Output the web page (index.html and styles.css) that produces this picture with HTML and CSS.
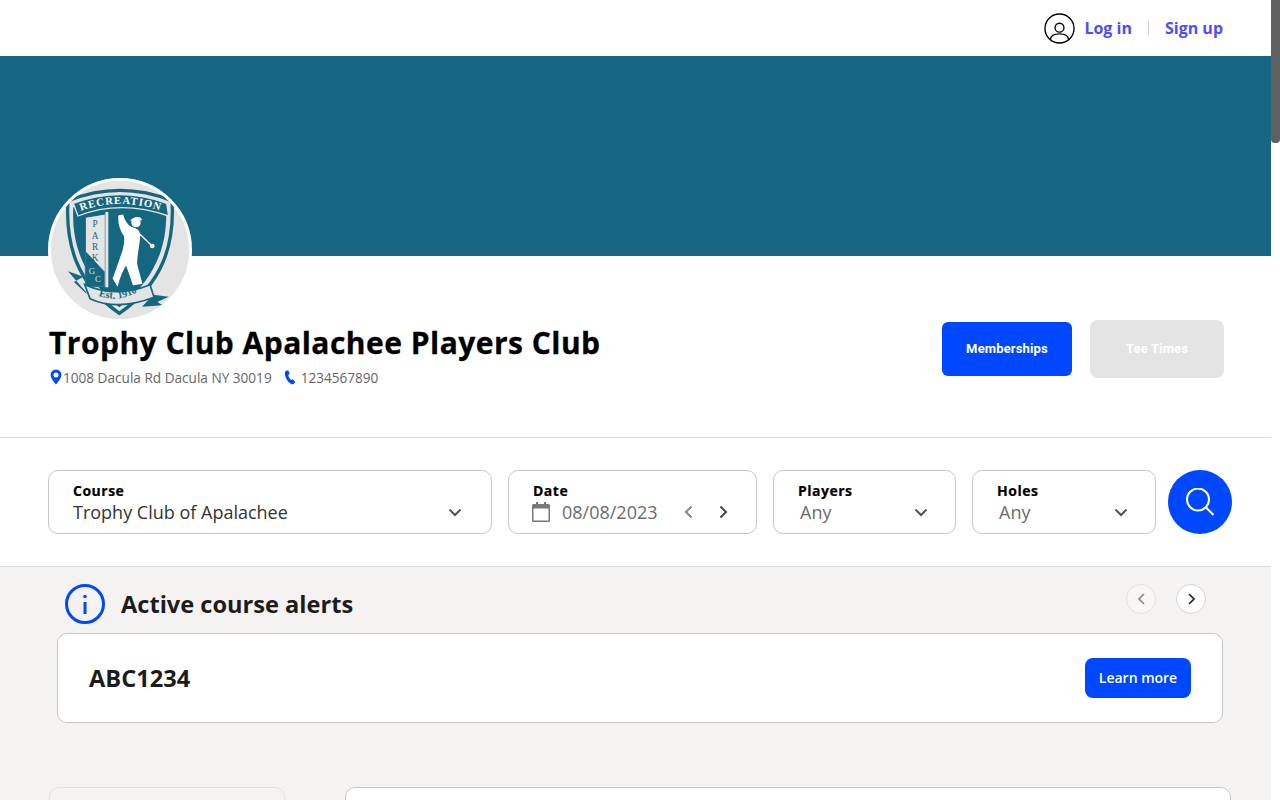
FILE: index.html
```html
<!DOCTYPE html>
<html lang="en">
<head>
<meta charset="utf-8">
<title>Trophy Club Apalachee Players Club</title>
<link rel="stylesheet" href="styles.css">
</head>
<body>
<div class="page">
  <main class="main">
    <header class="topbar">
      <svg class="user-icon" viewBox="0 0 32 32" fill="none" stroke="#000" stroke-width="1.4">
        <circle cx="16" cy="16" r="15"/>
        <circle cx="16" cy="15.200" r="4.600"/>
        <path d="M6.600 27.500C7 23.500 11 21.600 16 21.600s9 1.900 9.400 5.900"/>
      </svg>
      <a class="auth-link" href="#">Log in</a>
      <span class="auth-sep"></span>
      <a class="auth-link" href="#">Sign up</a>
    </header>

    <div class="banner"></div>

    <section class="club">
      <div class="club-left">
        <div class="logo">
          <svg class="crest" viewBox="33 33 414 414">
            <circle cx="240" cy="240" r="207" fill="#e4e4e4"/>
            <path d="M84 92Q240 30 396 92C404 220 370 340 238 430C108 340 76 220 84 92Z" fill="#e4e4e4" stroke="#15667f" stroke-width="10"/>
            <path d="M100 112L378 112C384 220 350 325 238 412C128 325 94 220 100 112Z" fill="#15667f"/>
            <path d="M136 142L196 132V350H136Z" fill="#e4e4e4" stroke="#15667f" stroke-width="3"/>
            <path d="M138 245L194 305V348H138Z" fill="#15667f"/>
            <rect x="196" y="126" width="9" height="226" fill="#e4e4e4"/>
            <path d="M100 100Q240 48 380 100L386 138Q240 88 114 138Z" fill="#15667f" stroke="#e4e4e4" stroke-width="4"/>
            <path id="crestArc" d="M116 125Q240 78 368 125" fill="none"/>
            <text class="crest-text crest-top"><textPath href="#crestArc" startOffset="50%" text-anchor="middle">RECREATION</textPath></text>
            <text class="crest-text crest-side" x="165" y="172" text-anchor="middle">P</text>
            <text class="crest-text crest-side" x="165" y="206" text-anchor="middle">A</text>
            <text class="crest-text crest-side" x="165" y="240" text-anchor="middle">R</text>
            <text class="crest-text crest-side" x="165" y="274" text-anchor="middle">K</text>
            <text class="crest-text crest-gc" x="156" y="312" text-anchor="middle">G</text>
            <text class="crest-text crest-gc" x="174" y="335" text-anchor="middle">C</text>
            <circle cx="288" cy="158" r="14" fill="#fff"/>
            <path d="M270 152Q284 136 302 143L307 150L296 153Z" fill="#fff"/>
            <path d="M237 138L248 136C252 150 260 165 273 172C285 175 295 178 298 190C300 205 296 220 294 235C292 255 288 265 290 285C295 305 300 322 305 340L280 344C272 318 265 298 258 282C248 300 238 320 232 345L220 325C228 305 240 270 250 240C254 225 256 210 254 198C243 185 235 160 237 138Z" fill="#fff" stroke="#fff" stroke-width="4"/>
            <path d="M300 193L334 226" stroke="#fff" stroke-width="4"/>
            <circle cx="337" cy="228" r="7" fill="#fff"/>
            <path d="M138 366L84 304L130 320L102 336L140 372ZM340 374L386 380L352 396L368 406L306 410Z" fill="#15667f"/>
            <path d="M134 344Q230 386 330 344L342 382Q232 424 150 386Z" fill="#e4e4e4" stroke="#15667f" stroke-width="5"/>
            <path id="crestRibbon" d="M172 376Q235 400 296 364" fill="none"/>
            <text class="crest-text crest-est"><textPath href="#crestRibbon" startOffset="50%" text-anchor="middle">Est. 1910</textPath></text>
          </svg>
        </div>
        <h1 class="club-name">Trophy Club Apalachee Players Club</h1>
        <div class="club-meta">
          <svg class="pin-icon" viewBox="0 0 12 16"><path fill-rule="evenodd" d="M6 .5a5.400 5.400 0 0 1 5.400 5.400C11.400 9.400 6 15.500 6 15.500S.6 9.400.6 5.900A5.400 5.400 0 0 1 6 .5Zm0 3a2.500 2.500 0 1 0 0 5 2.500 2.500 0 0 0 0-5Z" fill="#0048ff"/></svg>
          <span>1008 Dacula Rd Dacula NY 30019</span>
          <svg class="phone-icon" viewBox="0 0 14 16"><path d="M2.200.8 4.600.3l1.500 3.800-1.600 1.200c.4 2 1.700 4.300 3.200 5.500l1.900-.8 2.500 3.100-1.800 1.900c-.8.600-1.900.4-2.900-.2C4 12.800 1.700 8.900 1.100 5.200.8 3.400 1 1.700 2.200.8Z" fill="#0048ff"/></svg>
          <span>1234567890</span>
        </div>
      </div>
      <div class="club-actions">
        <a class="btn-member" href="#">Memberships</a>
        <a class="btn-tee" href="#">Tee Times</a>
      </div>
    </section>

    <section class="filters">
      <div class="field field-course">
        <div class="field-label">Course</div>
        <div class="field-row">
          <span class="field-value value-dark">Trophy Club of Apalachee</span>
          <svg class="chev-down" viewBox="0 0 14 9"><path d="M1.500 1.500 7 7l5.500-5.500"/></svg>
        </div>
      </div>
      <div class="field field-date">
        <div class="field-label">Date</div>
        <div class="field-row">
          <svg class="cal-icon" viewBox="0 0 18 20"><path d="M4 0h2v2h6V0h2v2h2.500A1.500 1.500 0 0 1 18 3.500v15a1.500 1.500 0 0 1-1.500 1.500h-15A1.500 1.500 0 0 1 0 18.500v-15A1.500 1.500 0 0 1 1.500 2H4Zm-2.500 6.500v12h15v-12Z" fill="#77777f"/></svg>
          <span class="field-value value-date">08/08/2023</span>
          <svg class="chev-side chev-prev" viewBox="0 0 9 14"><path d="M7.500 1.500 2 7l5.500 5.500"/></svg>
          <svg class="chev-side chev-next" viewBox="0 0 9 14"><path d="M1.500 1.500 7 7l-5.500 5.500"/></svg>
        </div>
      </div>
      <div class="field field-players">
        <div class="field-label">Players</div>
        <div class="field-row">
          <span class="field-value value-any">Any</span>
          <svg class="chev-down chev-narrow" viewBox="0 0 14 9"><path d="M1.500 1.500 7 7l5.500-5.500"/></svg>
        </div>
      </div>
      <div class="field field-holes">
        <div class="field-label">Holes</div>
        <div class="field-row">
          <span class="field-value value-any">Any</span>
          <svg class="chev-down chev-narrow" viewBox="0 0 14 9"><path d="M1.500 1.500 7 7l5.500-5.500"/></svg>
        </div>
      </div>
      <button class="search-btn" aria-label="Search">
        <svg viewBox="0 0 28 28" fill="none" stroke="#fff" stroke-width="2"><circle cx="12" cy="11.500" r="11"/><path d="m20 19.500 7.500 7.500"/></svg>
      </button>
    </section>

    <section class="content">
      <div class="alerts-head">
        <div class="alerts-title">
          <svg class="info-icon" viewBox="0 0 40 40" fill="none"><circle cx="20" cy="20" r="18.500" stroke="#0048ff" stroke-width="3"/><circle cx="20" cy="12.500" r="1.800" fill="#0048ff"/><path d="M20 18v12" stroke="#0048ff" stroke-width="3"/></svg>
          <h2>Active course alerts</h2>
        </div>
        <div class="alerts-nav">
          <span class="nav-circle nav-off"><svg viewBox="0 0 9 14"><path d="M7 2 2 7l5 5"/></svg></span>
          <span class="nav-circle nav-on"><svg viewBox="0 0 9 14"><path d="m2 2 5 5-5 5"/></svg></span>
        </div>
      </div>
      <div class="alert-card">
        <span class="alert-code">ABC1234</span>
        <a class="btn-learn" href="#">Learn more</a>
      </div>
      <div class="results">
        <div class="side-card"></div>
        <div class="list-card"></div>
      </div>
    </section>
  </main>
  <div class="scrollbar"><div class="scroll-thumb"></div></div>
</div>
</body>
</html>
```

FILE: styles.css
```css
* { box-sizing: border-box; }
html, body { margin: 0; padding: 0; height: 100%; }
body { font-family: "Open Sans", "Liberation Sans", sans-serif; background: #fff; overflow: hidden; }
a { text-decoration: none; }
h1, h2 { margin: 0; }

.page { display: flex; height: 800px; overflow: hidden; }
.main { flex: 1; min-width: 0; overflow: hidden; }
.scrollbar { width: 9px; background: #fff; }
.scroll-thumb { height: 143px; background: #5f5f5f; border-radius: 0 0 4px 4px; }

.topbar { height: 56px; display: flex; align-items: center; justify-content: flex-end; padding-right: 48px; }
.user-icon { width: 31px; height: 31px; margin-right: 9px; }
.auth-link { color: #4d4dff; font-size: 16px; font-weight: 700; line-height: 24px; }
.auth-sep { width: 1px; height: 14px; background: #d0d0d0; margin: 0 16px; }

.banner { height: 200px; background: #156682; }

.club { height: 182px; border-bottom: 1px solid #dcdcdc; padding: 0 47px 0 48px; display: flex; justify-content: space-between; }
.club-left { display: flex; flex-direction: column; }
.logo { width: 144px; height: 144px; margin-top: -78px; border: 3px solid #fff; border-radius: 50%; background: #e4e4e4; position: relative; overflow: hidden; flex: none; }
.crest { display: block; width: 138px; height: 138px; }
.crest-text { font-family: "Liberation Serif", serif; }
.crest-top { fill: #fff; font-size: 32px; font-weight: 700; letter-spacing: 3px; }
.crest-side { fill: #15667f; font-size: 28px; }
.crest-gc { fill: #e4e4e4; font-size: 26px; }
.crest-est { fill: #15667f; font-size: 31px; font-weight: 700; }
.club-name { margin: 0 0 0 1px; font-size: 30px; line-height: 42px; font-weight: 700; letter-spacing: .47px; -webkit-text-stroke: .3px #000; color: #000; white-space: nowrap; }
.club-meta { margin: 4px 0 0 2px; display: flex; align-items: center; font-size: 13.600px; line-height: 20px; color: #666; white-space: nowrap; }
.pin-icon { width: 12px; height: 16px; margin-right: 1px; margin-top: -2px; }
.phone-icon { width: 13px; height: 15px; margin: -2px 4px 0 12px; }

.club-actions { display: flex; align-items: center; gap: 18px; margin-top: 64px; height: 58px; }
.btn-member, .btn-tee { display: flex; align-items: center; justify-content: center; color: #fff; font-family: Roboto, "Open Sans", sans-serif; font-weight: 700; font-size: 13px; letter-spacing: .15px; padding-bottom: 2px; }
.btn-member { width: 130px; height: 54px; background: #0048ff; border-radius: 6px; }
.btn-tee { width: 134px; height: 58px; background: #e4e4e4; border-radius: 8px; }

.filters { height: 129px; border-bottom: 1px solid #dcdcdc; padding: 32px 39px 0 48px; display: flex; align-items: flex-start; gap: 16px; }
.field { height: 64px; border: 1px solid #c6c6c6; border-radius: 10px; background: #fff; padding: 11px 0 0 24px; flex: none; }
.field-course { width: 444px; }
.field-date { width: 249px; }
.field-players { width: 183px; }
.field-holes { width: 184px; }
.field-label { font-size: 14px; line-height: 18px; font-weight: 700; color: #000; letter-spacing: .5px; -webkit-text-stroke: .2px #000; }
.field-row { display: flex; align-items: center; height: 24px; position: relative; }
.field-value { font-size: 18px; line-height: 24px; white-space: nowrap; }
.value-dark { color: #333; }
.value-date { color: #6b6b6b; margin-left: 12px; }
.value-any { color: #6b6b6b; margin-left: 2px; }
.chev-down { width: 14px; height: 9px; fill: none; stroke: #555; stroke-width: 2; margin-left: auto; margin-right: 29px; }
.chev-narrow { margin-right: 27px; }
.chev-side { width: 9px; height: 14px; fill: none; stroke-width: 2; }
.chev-prev { stroke: #888; margin-left: 26px; }
.chev-next { stroke: #444; margin-left: 26px; }
.cal-icon { width: 18px; height: 20px; margin: -1px 0 0 -1px; }

.search-btn { width: 64px; height: 64px; margin-left: -4px; border: 0; border-radius: 50%; background: #0048ff; display: flex; align-items: center; justify-content: center; padding: 0; flex: none; }
.search-btn svg { width: 28px; height: 28px; }

.content { height: 233px; background: #f5f3f1; padding: 0 48px 0 57px; }
.alerts-head { height: 66px; display: flex; justify-content: space-between; padding: 17px 17px 0 8px; }
.alerts-title { display: flex; align-items: center; gap: 16px; height: 40px; }
.info-icon { width: 40px; height: 40px; }
.alerts-title h2 { font-size: 23.600px; line-height: 32px; font-weight: 700; color: #1c1c1c; }
.alerts-nav { display: flex; gap: 20px; }
.nav-circle { width: 30px; height: 30px; border-radius: 50%; border: 1px solid #e2e0de; display: flex; align-items: center; justify-content: center; }
.nav-circle svg { width: 9px; height: 14px; fill: none; stroke-width: 1.700; }
.nav-off { background: #f8f7f5; }
.nav-off svg { stroke: #8a8a8a; }
.nav-on { background: #fff; border-color: #d4d4d4; }
.nav-on svg { stroke: #222; }

.alert-card { height: 90px; background: #fff; border: 1px solid #c6c6c6; border-radius: 10px; display: flex; align-items: center; justify-content: space-between; padding: 0 31px; }
.alert-code { font-size: 23.600px; font-weight: 700; color: #1c1c1c; }
.btn-learn { width: 106px; height: 40px; background: #0048ff; border-radius: 8px; color: #fff; font-size: 14px; font-weight: 600; display: flex; align-items: center; justify-content: center; padding-bottom: 2px; }

.results { display: flex; gap: 60px; margin: 64px -8px 0 -8px; }
.side-card { width: 236px; height: 60px; border: 1px solid #e0e0e0; border-radius: 10px; flex: none; }
.list-card { flex: 1; height: 60px; background: #fff; border: 1px solid #c6c6c6; border-radius: 10px; }
```
